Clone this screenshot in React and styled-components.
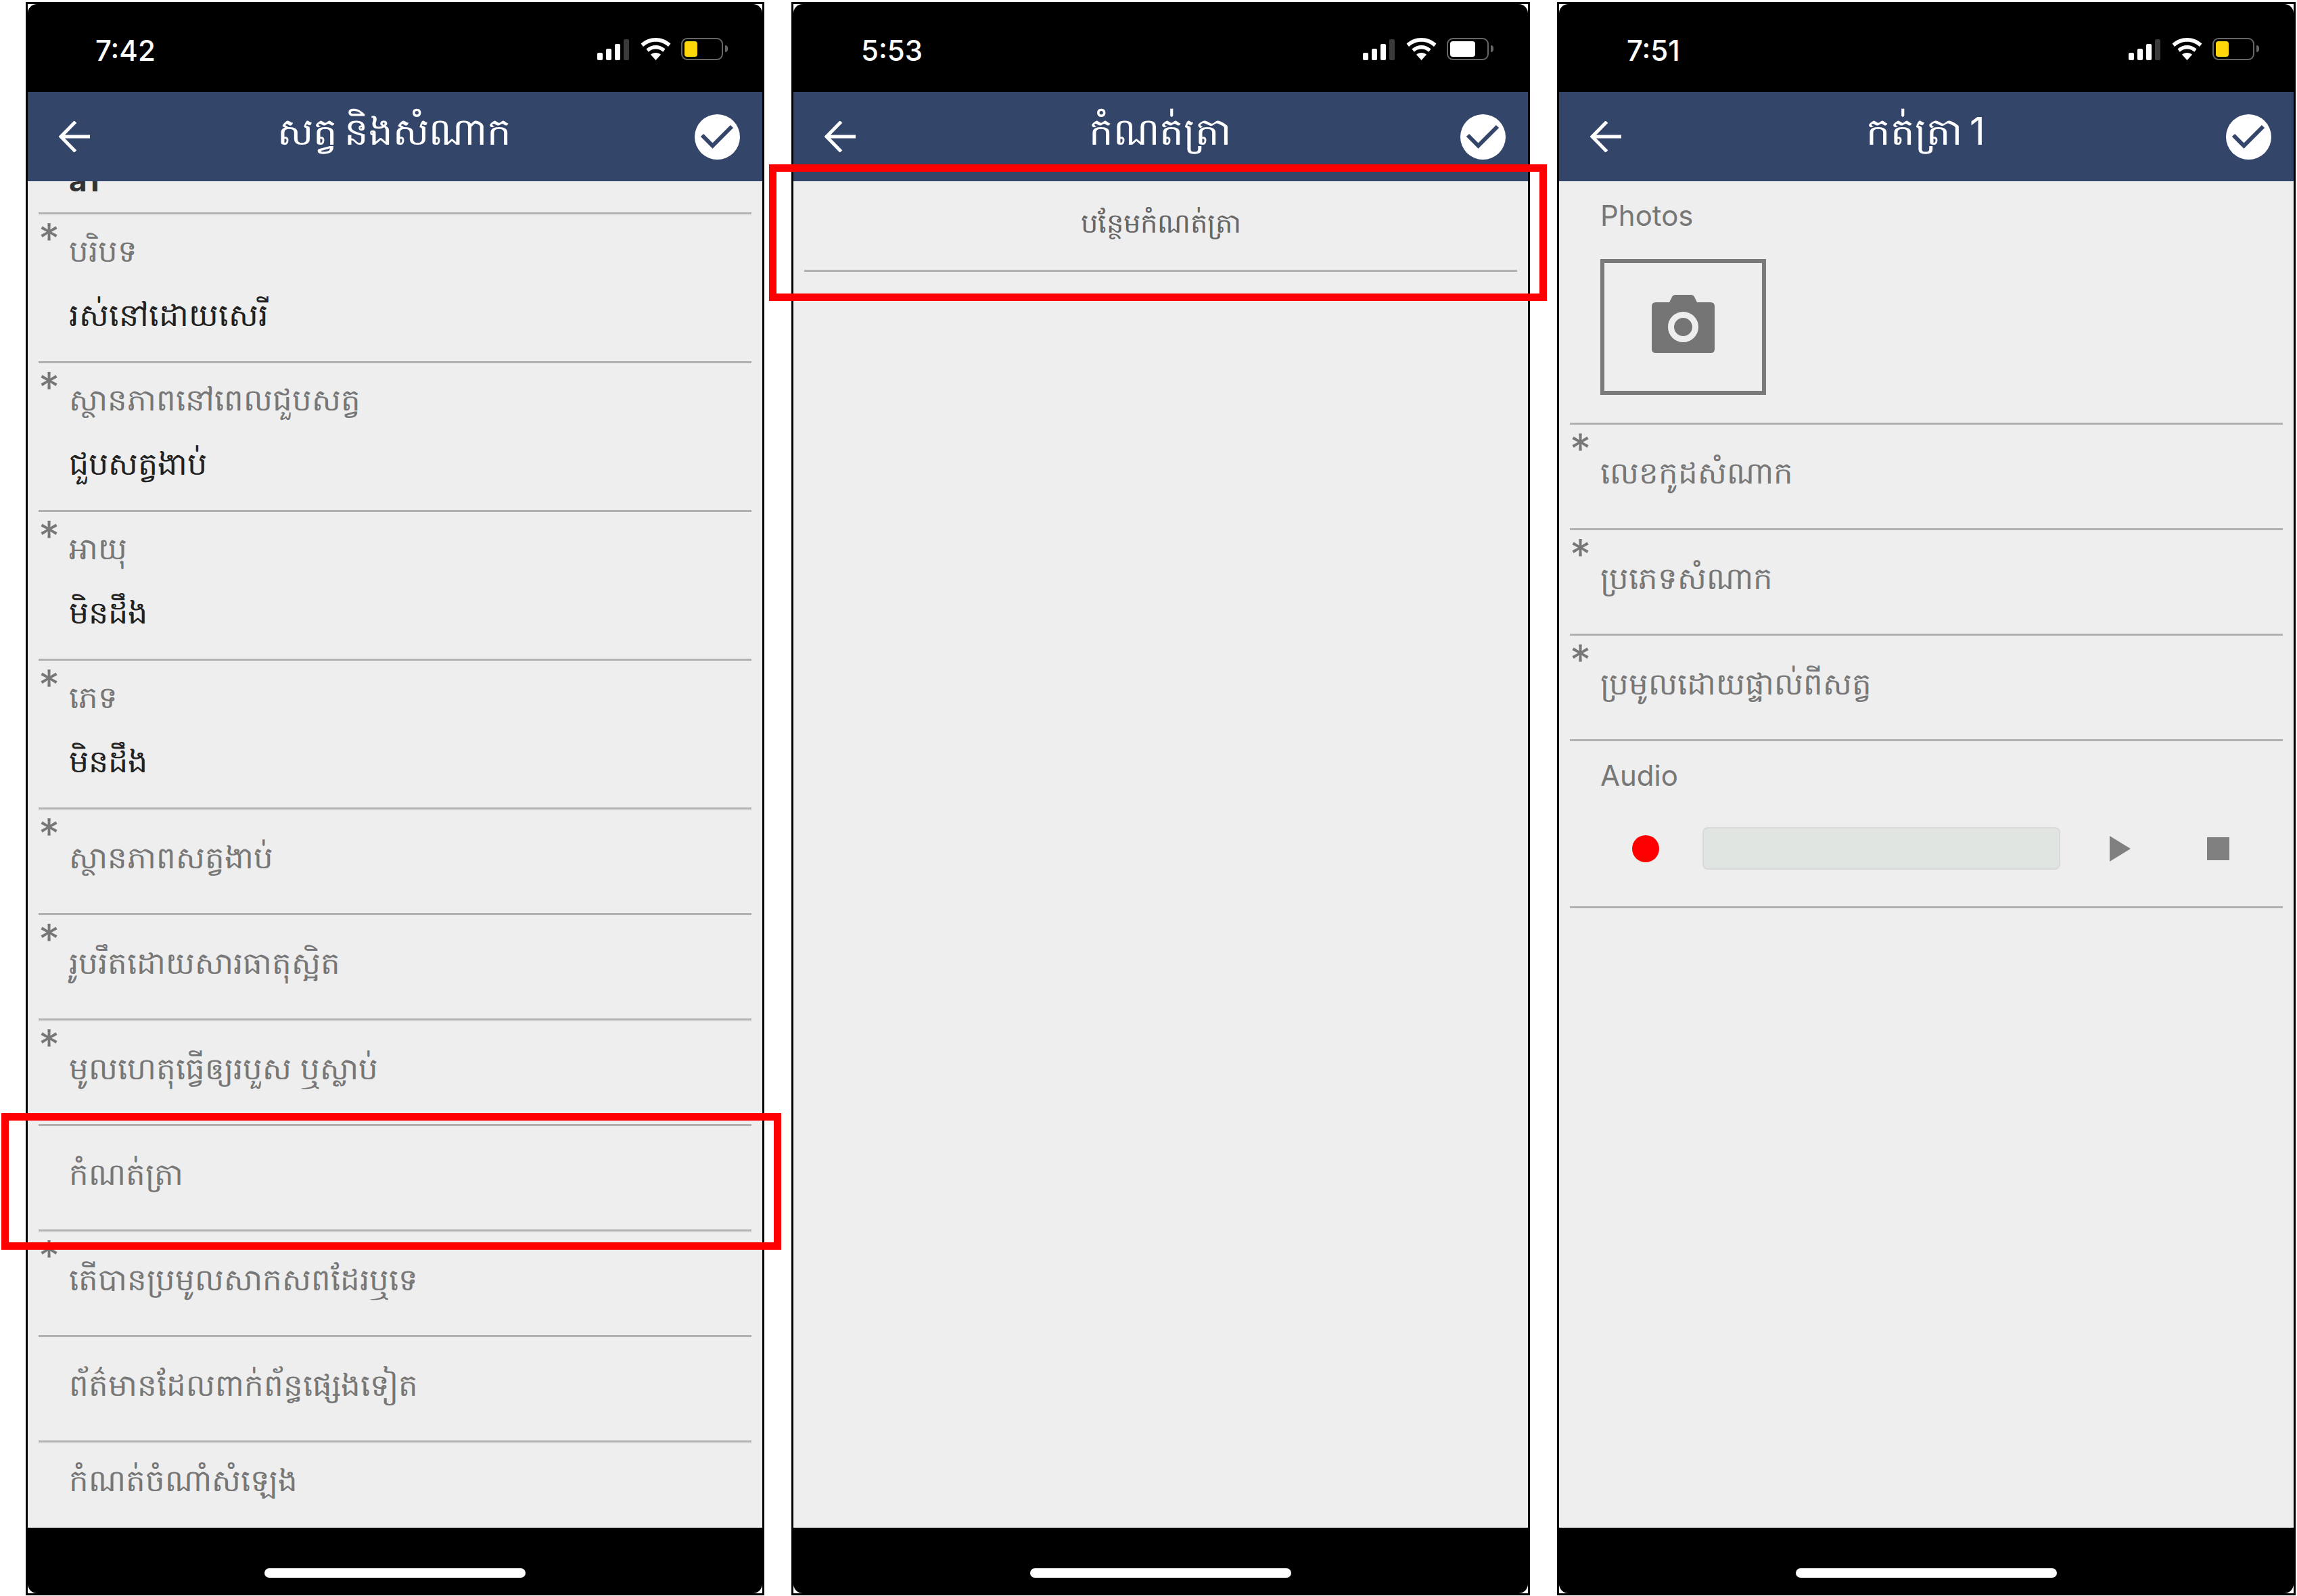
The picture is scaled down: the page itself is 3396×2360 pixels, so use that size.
import styled, { createGlobalStyle } from 'styled-components';

const GlobalStyle = createGlobalStyle`
  html, body {
    margin: 0;
    padding: 0;
    background: #fff;
    font-family: Inter, "Noto Sans", "DejaVu Sans", sans-serif;
  }
`;

const Page = styled.div`
  width: 3396px;
  height: 2360px;
  box-sizing: border-box;
  padding: 3px 0 0 38px;
  display: flex;
  gap: 40px;
  position: relative;
  overflow: hidden;
`;

const Phone = styled.div`
  width: 1092px;
  height: 2356px;
  box-sizing: border-box;
  border: 3px solid #000;
  background: #fff;
  flex: none;
`;

const Screen = styled.div`
  height: 100%;
  display: flex;
  flex-direction: column;
  border-radius: 14px;
  overflow: hidden;
  background: #eee;
`;

const StatusBar = styled.div`
  flex: none;
  height: 130px;
  background: #000;
  color: #fff;
  display: flex;
  align-items: flex-start;
  justify-content: space-between;
  padding: 47px 58px 0 100px;
  box-sizing: border-box;
`;

const Clock = styled.span`
  font-size: 42px;
  font-weight: 500;
  line-height: 44px;
`;

const StatusIcons = styled.div`
  display: flex;
  align-items: flex-end;
  gap: 15px;
  height: 36px;
`;

const Bars = styled.div`
  display: flex;
  align-items: flex-end;
  gap: 5px;
  height: 32px;
  margin-right: 2px;
`;

const Bar = styled.i`
  display: block;
  width: 8px;
  height: ${(props) => props.$h}px;
  border-radius: 2px;
  background: ${(props) => (props.$off ? '#3a3a3a' : '#fff')};
`;

const Battery = styled.div`
  width: 62px;
  height: 33px;
  box-sizing: border-box;
  border: 2.5px solid #666;
  border-radius: 9px;
  padding: 3px;
  position: relative;

  &::after {
    content: '';
    position: absolute;
    right: -9px;
    top: 9px;
    width: 4px;
    height: 10px;
    border-radius: 0 4px 4px 0;
    background: #666;
  }
`;

const BatteryFill = styled.div`
  height: 100%;
  border-radius: 4px;
  width: ${(props) => props.$level}%;
  background: ${(props) => (props.$level < 50 ? '#ffd60a' : '#fff')};
`;

const Header = styled.header`
  flex: none;
  height: 132px;
  background: #34456a;
  color: #fff;
  display: flex;
  align-items: center;
  padding: 0 33px 0 46px;
`;

const Title = styled.h1`
  flex: 1;
  margin: 0 0 5px;
  padding-left: 6px;
  text-align: center;
  font-size: 56px;
  font-weight: 400;
  word-spacing: -6px;
  white-space: nowrap;
`;

const List = styled.div`
  flex: 1;
  min-height: 0;
  overflow: hidden;
  display: flex;
  flex-direction: column;
  padding: 0 16px;
`;

const ClippedRow = styled.div`
  flex: none;
  height: 46px;
  border-bottom: 3px solid #b1b1b1;
  padding-left: 45px;
  font-size: 46px;
  font-weight: 700;
  line-height: 48px;
  color: #333;
  overflow: hidden;

  span {
    display: block;
    margin-top: -26px;
  }
`;

const Row = styled.div`
  flex: none;
  height: ${(props) => (props.$tall ? 220 : 156)}px;
  box-sizing: border-box;
  border-bottom: 3px solid #b1b1b1;
  display: grid;
  grid-template-columns: 45px 1fr;
  align-content: start;
`;

const Star = styled.span`
  font-size: 62px;
  line-height: 46px;
  color: #777;
  padding-top: 13px;
`;

const RowBody = styled.div`
  margin-top: ${(props) => props.$top}px;
  display: flex;
  flex-direction: column;
  gap: 22px;
`;

const Label = styled.div`
  font-size: 45px;
  line-height: 72px;
  color: #777;
  white-space: nowrap;
`;

const Value = styled.div`
  font-size: 46px;
  line-height: 72px;
  color: #222;
  white-space: nowrap;
`;

const AddRow = styled.div`
  flex: none;
  height: 134px;
  box-sizing: border-box;
  border-bottom: 3px solid #b1b1b1;
  display: flex;
  justify-content: center;
  padding-top: 32px;
  font-size: 40px;
  line-height: 60px;
  color: #666;
`;

const Section = styled.section`
  flex: none;
  height: ${(props) => props.$height}px;
  box-sizing: border-box;
  border-bottom: 3px solid #b1b1b1;
  padding-left: 45px;
  display: flex;
  flex-direction: column;
`;

const SectionTitle = styled.div`
  font-size: 42px;
  line-height: 50px;
  color: #777;
  margin-top: 26px;
`;

const PhotoBox = styled.div`
  width: 245px;
  height: 201px;
  box-sizing: border-box;
  border: 6px solid #7a7a7a;
  margin-top: 39px;
  padding-bottom: 10px;
  display: flex;
  align-items: center;
  justify-content: center;
`;

const AudioControls = styled.div`
  display: flex;
  align-items: center;
  margin-top: 51px;
  padding-left: 47px;
`;

const RecordDot = styled.div`
  width: 40px;
  height: 40px;
  border-radius: 50%;
  background: #f00;
  margin-right: 64px;
`;

const Track = styled.div`
  width: 529px;
  height: 63px;
  box-sizing: border-box;
  border: 2px solid #d9d9d9;
  border-radius: 8px;
  background: #e1e5e2;
  margin-right: 73px;
`;

const PlayShape = styled.div`
  width: 0;
  height: 0;
  border-style: solid;
  border-width: 19px 0 19px 31px;
  border-color: transparent transparent transparent #808080;
  margin-right: 113px;
`;

const StopShape = styled.div`
  width: 33px;
  height: 34px;
  background: #808080;
`;

const BottomBar = styled.div`
  flex: none;
  height: 97px;
  background: #000;
  display: flex;
  justify-content: center;
  padding-top: 60px;
  box-sizing: border-box;
`;

const HomeIndicator = styled.div`
  width: 386px;
  height: 14px;
  border-radius: 7px;
  background: #fff;
`;

const Callout = styled.div`
  position: absolute;
  box-sizing: border-box;
  border: 11px solid #f00;
  pointer-events: none;
  left: ${(props) => props.$x}px;
  top: ${(props) => props.$y}px;
  width: ${(props) => props.$w}px;
  height: ${(props) => props.$h}px;
`;

const BackArrow = () => (
  <svg width="46" height="46" viewBox="0 0 46 46" fill="none" stroke="#fff" strokeWidth="5">
    <path d="M24.5 1 L3 23 L24.5 45 M3 23 H46" />
  </svg>
);

const DoneIcon = () => (
  <svg width="67" height="67" viewBox="0 0 67 67">
    <circle cx="33.5" cy="33.5" r="33.5" fill="#fff" />
    <path d="M11 31 L26.5 46.5 L55 18" fill="none" stroke="#34456a" strokeWidth="6" />
  </svg>
);

const WifiIcon = () => (
  <svg width="45" height="33" viewBox="0 0 45 33" fill="#fff">
    <path d="M22.5 0 C31 0 38.6 3.3 44.5 8.6 L41 13 C36 8.4 29.6 5.7 22.5 5.7 C15.4 5.7 9 8.4 4 13 L0.5 8.6 C6.4 3.3 14 0 22.5 0 Z" />
    <path d="M22.5 11 C27.8 11 32.8 13 36.6 16.6 L33.2 20.8 C30.4 18 26.6 16.5 22.5 16.5 C18.4 16.5 14.6 18 11.8 20.8 L8.4 16.6 C12.2 13 17.2 11 22.5 11 Z" />
    <path d="M22.5 22 C25.4 22 28 23 30 24.8 L22.5 33 L15 24.8 C17 23 19.6 22 22.5 22 Z" />
  </svg>
);

const CameraIcon = () => (
  <svg width="93" height="86" viewBox="0 0 93 86">
    <path
      d="M6 11 H26 L30 3 Q31.5 0 35 0 H58 Q61.5 0 63 3 L67 11 H87 Q93 11 93 17 V80 Q93 86 87 86 H6 Q0 86 0 80 V17 Q0 11 6 11 Z"
      fill="#757575"
    />
    <circle cx="46.5" cy="47.5" r="18" fill="none" stroke="#eee" strokeWidth="9" />
  </svg>
);

const StatusRow = ({ time, level }) => (
  <StatusBar>
    <Clock>{time}</Clock>
    <StatusIcons>
      <Bars>
        <Bar $h={11} />
        <Bar $h={17} />
        <Bar $h={24} />
        <Bar $h={31} $off />
      </Bars>
      <WifiIcon />
      <Battery>
        <BatteryFill $level={level} />
      </Battery>
    </StatusIcons>
  </StatusBar>
);

const Frame = ({ time, level, title, children }) => (
  <Phone>
    <Screen>
      <StatusRow time={time} level={level} />
      <Header>
        <BackArrow />
        <Title>{title}</Title>
        <DoneIcon />
      </Header>
      <List>{children}</List>
      <BottomBar>
        <HomeIndicator />
      </BottomBar>
    </Screen>
  </Phone>
);

const Field = ({ label, value, required, top = 35 }) => (
  <Row $tall={Boolean(value)}>
    <Star>{required ? '*' : ''}</Star>
    <RowBody $top={value ? 18 : top}>
      <Label>{label}</Label>
      {value && <Value>{value}</Value>}
    </RowBody>
  </Row>
);

const animalFields = [
  { label: 'បរិបទ', value: 'រស់នៅដោយសេរី', required: true },
  { label: 'ស្ថានភាពនៅពេលជួបសត្វ', value: 'ជួបសត្វងាប់', required: true },
  { label: 'អាយុ', value: 'មិនដឹង', required: true },
  { label: 'ភេទ', value: 'មិនដឹង', required: true },
  { label: 'ស្ថានភាពសត្វងាប់', required: true },
  { label: 'រូបរឹតដោយសារធាតុស្អិត', required: true },
  { label: 'មូលហេតុធ្វើឲ្យរបួស ឬស្លាប់', required: true },
  { label: 'កំណត់ត្រា' },
  { label: 'តើបានប្រមូលសាកសពដែរឬទេ', required: true },
  { label: 'ព័ត៌មានដែលពាក់ព័ន្ធផ្សេងទៀត' },
  { label: 'កំណត់ចំណាំសំឡេង', top: 20 },
];

const noteFields = [
  { label: 'លេខកូដសំណាក', required: true },
  { label: 'ប្រភេទសំណាក', required: true },
  { label: 'ប្រមូលដោយផ្ទាល់ពីសត្វ', required: true },
];

export default function App() {
  return (
    <>
      <GlobalStyle />
      <Page>
        <Frame time="7:42" level={37} title="សត្វ និងសំណាក">
          <ClippedRow>
            <span>a1</span>
          </ClippedRow>
          {animalFields.map((field) => (
            <Field key={field.label} {...field} />
          ))}
        </Frame>
        <Frame time="5:53" level={72} title="កំណត់ត្រា">
          <AddRow>បន្ថែមកំណត់ត្រា</AddRow>
        </Frame>
        <Frame time="7:51" level={37} title="កត់ត្រា 1">
          <Section $height={360}>
            <SectionTitle>Photos</SectionTitle>
            <PhotoBox>
              <CameraIcon />
            </PhotoBox>
          </Section>
          {noteFields.map((field) => (
            <Field key={field.label} {...field} />
          ))}
          <Section $height={247}>
            <SectionTitle>Audio</SectionTitle>
            <AudioControls>
              <RecordDot />
              <Track />
              <PlayShape />
              <StopShape />
            </AudioControls>
          </Section>
        </Frame>
        <Callout $x={2} $y={1646} $w={1153} $h={202} />
        <Callout $x={1137} $y={243} $w={1150} $h={202} />
      </Page>
    </>
  );
}
